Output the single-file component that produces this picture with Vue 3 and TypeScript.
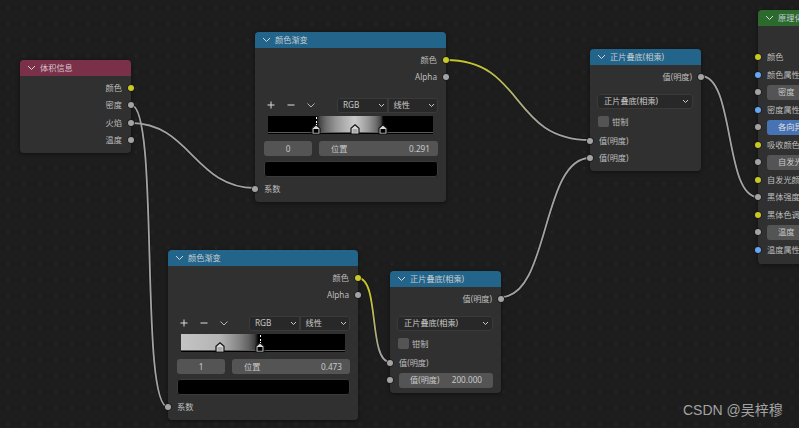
<script setup lang="ts">
type Sock = 'grey' | 'yellow' | 'blue'
interface Row {
  kind: 'out' | 'in' | 'field' | 'accent' | 'select' | 'check' | 'ramp'
  label?: string
  value?: string
  sock?: Sock
  stop?: string
  pos?: string
  gradient?: string
  handles?: { x: number; fill: string; active?: boolean }[]
}
interface NodeItem {
  id: string
  title: string
  theme: string
  x: number
  y: number
  w: number
  rows: Row[]
}

const mixRows = (last: Row): Row[] => [
  { kind: 'out', label: '值(明度)', sock: 'grey' },
  { kind: 'select', label: '正片叠底(相乘)' },
  { kind: 'check', label: '钳制' },
  { kind: 'in', label: '值(明度)', sock: 'grey' },
  last,
]

const nodes: NodeItem[] = [
  {
    id: 'vol', title: '体积信息', theme: 'wine', x: 20, y: 60, w: 111,
    rows: [
      { kind: 'out', label: '颜色', sock: 'yellow' },
      { kind: 'out', label: '密度', sock: 'grey' },
      { kind: 'out', label: '火焰', sock: 'grey' },
      { kind: 'out', label: '温度', sock: 'grey' },
    ],
  },
  {
    id: 'r1', title: '颜色渐变', theme: 'blue', x: 255, y: 32, w: 191,
    rows: [
      { kind: 'out', label: '颜色', sock: 'yellow' },
      { kind: 'out', label: 'Alpha', sock: 'grey' },
      {
        kind: 'ramp', stop: '0', pos: '0.291',
        gradient: 'linear-gradient(90deg,#000 0,#000 29.1%,#464646 31.4%,#6c6c6c 35%,#949494 40.8%,#b1b1b1 46.6%,#c9c9c9 52.5%,#b1b1b1 56.9%,#949494 61.25%,#6c6c6c 65.6%,#464646 68.25%,#000 70%,#000 100%)',
        handles: [{ x: 48, fill: '#000', active: true }, { x: 87, fill: '#aaa' }, { x: 115, fill: '#000' }],
      },
      { kind: 'in', label: '系数', sock: 'grey' },
    ],
  },
  {
    id: 'r2', title: '颜色渐变', theme: 'blue', x: 168, y: 250, w: 190,
    rows: [
      { kind: 'out', label: '颜色', sock: 'yellow' },
      { kind: 'out', label: 'Alpha', sock: 'grey' },
      {
        kind: 'ramp', stop: '1', pos: '0.473',
        gradient: 'linear-gradient(90deg,#c4c4c4 0,#b4b4b4 23.5%,#9e9e9e 29.45%,#848484 35.4%,#616161 41.35%,#3f3f3f 44.9%,#000 47.3%,#000 100%)',
        handles: [{ x: 39, fill: '#aaa' }, { x: 79, fill: '#000', active: true }],
      },
      { kind: 'in', label: '系数', sock: 'grey' },
    ],
  },
  {
    id: 'm2', title: '正片叠底(相乘)', theme: 'blue', x: 390, y: 271, w: 111,
    rows: mixRows({ kind: 'field', label: '值(明度)', value: '200.000', sock: 'grey' }),
  },
  {
    id: 'm1', title: '正片叠底(相乘)', theme: 'blue', x: 590, y: 49, w: 111,
    rows: mixRows({ kind: 'in', label: '值(明度)', sock: 'grey' }),
  },
  {
    id: 'pv', title: '原理化体积', theme: 'green', x: 758, y: 10, w: 120,
    rows: [
      { kind: 'out', label: '体积', sock: 'grey' },
      { kind: 'in', label: '颜色', sock: 'yellow' },
      { kind: 'in', label: '颜色属性', sock: 'blue' },
      { kind: 'field', label: '密度', value: '1.000', sock: 'grey' },
      { kind: 'in', label: '密度属性', sock: 'blue' },
      { kind: 'accent', label: '各向异性', value: '0.000', sock: 'grey' },
      { kind: 'in', label: '吸收颜色', sock: 'yellow' },
      { kind: 'field', label: '自发光强度', value: '0.000', sock: 'grey' },
      { kind: 'in', label: '自发光颜色', sock: 'yellow' },
      { kind: 'in', label: '黑体强度', sock: 'grey' },
      { kind: 'in', label: '黑体色调', sock: 'yellow' },
      { kind: 'field', label: '温度', value: '1000', sock: 'grey' },
      { kind: 'in', label: '温度属性', sock: 'blue' },
    ],
  },
]

const links = [
  { d: 'M131 123C190 123 195 188 255 188', stroke: '#a2a2a2' },
  { d: 'M131 105C160 105 139 407 168 407', stroke: '#a2a2a2' },
  { d: 'M446 60C525 60 510 140 590 140', stroke: 'url(#gradA)' },
  { d: 'M358 278C380 278 368 362 390 362', stroke: 'url(#gradB)' },
  { d: 'M501 297C550 297 541 158 590 158', stroke: '#a2a2a2' },
  { d: 'M701 76C735 76 724 197 758 197', stroke: '#a2a2a2' },
]

const place = (n: NodeItem) => ({ left: `${n.x}px`, top: `${n.y}px`, width: `${n.w}px` })
const grad = (r: Row) => ({ background: r.gradient })
const handleAt = (x: number) => ({ left: `${x - 5}px` })
</script>

<template>
  <div class="canvas">
    <svg class="links" width="799" height="428" viewBox="0 0 799 428">
      <defs>
        <linearGradient id="gradA" gradientUnits="userSpaceOnUse" x1="446" y1="60" x2="590" y2="140">
          <stop offset="0.15" stop-color="#c4c42e" />
          <stop offset="0.7" stop-color="#a2a2a2" />
        </linearGradient>
        <linearGradient id="gradB" gradientUnits="userSpaceOnUse" x1="358" y1="278" x2="390" y2="362">
          <stop offset="0.2" stop-color="#c4c42e" />
          <stop offset="0.85" stop-color="#a2a2a2" />
        </linearGradient>
      </defs>
      <g fill="none">
        <path v-for="l in links" :key="l.d + 'o'" :d="l.d" stroke="#141414" stroke-width="3.2" />
        <path v-for="l in links" :key="l.d" :d="l.d" :stroke="l.stroke" stroke-width="1.8" />
      </g>
    </svg>

    <section v-for="n in nodes" :key="n.id" class="node" :class="n.id" :style="place(n)">
      <header class="head" :class="n.theme">
        <svg class="chev" width="9" height="6" viewBox="0 0 9 6"><path d="M1 1l3.5 3.5L8 1" /></svg>
        <span>{{ n.title }}</span>
      </header>
      <div class="body">
        <template v-for="(r, i) in n.rows" :key="i">
          <div v-if="r.kind === 'out'" class="row out">
            <span>{{ r.label }}</span><i class="sock right" :class="r.sock" />
          </div>
          <div v-else-if="r.kind === 'in'" class="row in">
            <i class="sock left" :class="r.sock" /><span>{{ r.label }}</span>
          </div>
          <div v-else-if="r.kind === 'field' || r.kind === 'accent'" class="row in">
            <i class="sock left" :class="r.sock" />
            <div class="num" :class="{ accent: r.kind === 'accent' }">
              <span>{{ r.label }}</span><span>{{ r.value }}</span>
            </div>
          </div>
          <div v-else-if="r.kind === 'select'" class="select wide">
            <span>{{ r.label }}</span>
            <svg class="caret" width="7" height="5" viewBox="0 0 7 5"><path d="M1 1l2.5 2.5L6 1" /></svg>
          </div>
          <div v-else-if="r.kind === 'check'" class="check">
            <i class="box" /><span>{{ r.label }}</span>
          </div>
          <div v-else class="rampwrap">
            <div class="tools">
              <svg class="tool" width="14" height="14" viewBox="0 0 14 14"><path d="M3.5 7h7M7 3.5v7" stroke="#dcdcdc" /></svg>
              <svg class="tool" width="14" height="14" viewBox="0 0 14 14"><path d="M3.5 7h7" stroke="#dcdcdc" /></svg>
              <svg class="tool" width="14" height="14" viewBox="0 0 14 14"><path d="M3.5 5.5L7 9l3.5-3.5" stroke="#b4b4b4" fill="none" /></svg>
              <div class="modes">
                <div class="select half"><span>RGB</span><svg class="caret" width="7" height="5" viewBox="0 0 7 5"><path d="M1 1l2.5 2.5L6 1" /></svg></div>
                <div class="select half"><span>线性</span><svg class="caret" width="7" height="5" viewBox="0 0 7 5"><path d="M1 1l2.5 2.5L6 1" /></svg></div>
              </div>
            </div>
            <div class="ramp">
              <div class="rampfill" :style="grad(r)" />
              <div v-for="h in r.handles" :key="h.x" class="handle" :style="handleAt(h.x)">
                <i v-if="h.active" class="dash" />
                <svg width="10" height="11" viewBox="0 0 10 11">
                  <path d="M5 .8L9 4.2V10H1V4.2Z" fill="#d8d8d8" stroke="#111" stroke-width="1.2" />
                  <rect x="2.5" y="5" width="5" height="3.8" :fill="h.fill" />
                </svg>
              </div>
            </div>
            <div class="rampnums">
              <div class="num stop"><span>{{ r.stop }}</span></div>
              <div class="num pos"><span>位置</span><span>{{ r.pos }}</span></div>
            </div>
            <div class="swatch" />
          </div>
        </template>
      </div>
    </section>

    <div class="mark">CSDN @吴梓穆</div>
  </div>
</template>

<style scoped>
.canvas {
  position: relative;
  width: 799px;
  height: 428px;
  overflow: hidden;
  background-color: #1d1d1d;
  background-image: radial-gradient(circle at center, #272727 0.8px, transparent 1.1px);
  background-size: 16px 16px;
  font-family: "Noto Sans", "Noto Sans CJK SC", sans-serif;
  font-size: 8.2px;
  line-height: 12px;
  color: #bebebe;
}
.links { position: absolute; left: 0; top: 0; }
.node {
  position: absolute;
  background: #303030;
  border-radius: 4px;
  box-shadow: 0 1px 4px rgba(0, 0, 0, 0.45);
}
.head {
  display: flex;
  align-items: center;
  gap: 4px;
  height: 16px;
  padding-left: 7px;
  border-radius: 4px 4px 0 0;
  color: #c6ced2;
}
.wine { background: #7b304a; color: #d4c5ca; }
.blue { background: #23648a; }
.green { background: #2b692d; }
.chev { fill: none; stroke: #d4d4d4; stroke-width: 1; flex: none; }
.body { padding: 3px 0 4px; }
.pv .body { padding: 5px 0 5.5px; }
.row {
  position: relative;
  display: flex;
  align-items: center;
  height: 17.5px;
  white-space: nowrap;
}
.out { justify-content: flex-end; padding-right: 9px; }
.in { padding-left: 9px; padding-right: 8px; }
.sock {
  position: absolute;
  top: 50%;
  width: 6px;
  height: 6px;
  margin-top: -3px;
  border-radius: 50%;
  box-shadow: 0 0 0 0.7px #1a1a1a;
}
.sock.left { left: -3px; }
.sock.right { right: -3px; }
.grey { background: #a3a3a3; }
.yellow { background: #c9c925; }
.sock.blue { background: #66a6f5; }
.num {
  box-sizing: border-box;
  display: flex;
  align-items: center;
  justify-content: space-between;
  flex: 1;
  height: 15px;
  padding: 0 11px;
  border-radius: 3px;
  background: #545454;
  color: #c8c8c8;
  white-space: nowrap;
}
.num.accent { background: #4772b3; color: #e0e0e0; }
.select {
  display: flex;
  align-items: center;
  justify-content: space-between;
  height: 15px;
  background: #282828;
  box-shadow: inset 0 0 0 1px #3a3a3a;
  color: #c8c8c8;
}
.select.wide {
  margin: 8px 8px 0 7px;
  padding: 0 4px 0 7px;
  border-radius: 3px;
}
.caret { fill: none; stroke: #c8c8c8; stroke-width: 1; flex: none; }
.check {
  display: flex;
  align-items: center;
  gap: 3px;
  height: 12px;
  margin: 7px 0 4.25px 8px;
}
.box {
  width: 11px;
  height: 11px;
  border-radius: 2px;
  background: #545454;
}
.rampwrap { padding: 12px 8px 3px 9px; }
.tools { display: flex; align-items: center; gap: 6px; height: 14px; }
.tool { flex: none; }
.modes { display: flex; margin-left: auto; width: 101px; }
.select.half { flex: 1; padding: 0 3px 0 6px; }
.select.half:first-child { border-radius: 3px 0 0 3px; }
.select.half:last-child { border-radius: 0 3px 3px 0; }
.ramp {
  position: relative;
  height: 18px;
  margin: 4px 5px 0 4px;
  background: #000;
}
.rampfill {
  position: absolute;
  left: 0;
  right: 0;
  top: 0;
  bottom: 1px;
  border-bottom: 1px solid #595959;
}
.handle {
  position: absolute;
  bottom: -1px;
  width: 10px;
  height: 11px;
  line-height: 0;
}
.dash {
  position: absolute;
  left: 4.5px;
  bottom: 10px;
  width: 1px;
  height: 8px;
  background: repeating-linear-gradient(180deg, #fff 0 2px, #000 2px 3.5px);
}
.rampnums { display: flex; gap: 7px; margin-top: 7px; }
.num.stop { flex: none; width: 48px; justify-content: center; }
.num.pos { padding: 0 8px 0 12px; }
.swatch {
  height: 16px;
  margin-top: 5px;
  background: #000;
  border-radius: 3px;
  box-shadow: inset 0 0 0 1px #3a3a3a;
}
.mark {
  position: absolute;
  left: 683px;
  top: 402px;
  font-family: "Liberation Sans", "Noto Sans CJK SC", sans-serif;
  font-size: 14px;
  line-height: 16px;
  color: #a3a3a3;
  white-space: nowrap;
}
</style>
<style>
html, body { background: #1d1d1d; }
</style>
